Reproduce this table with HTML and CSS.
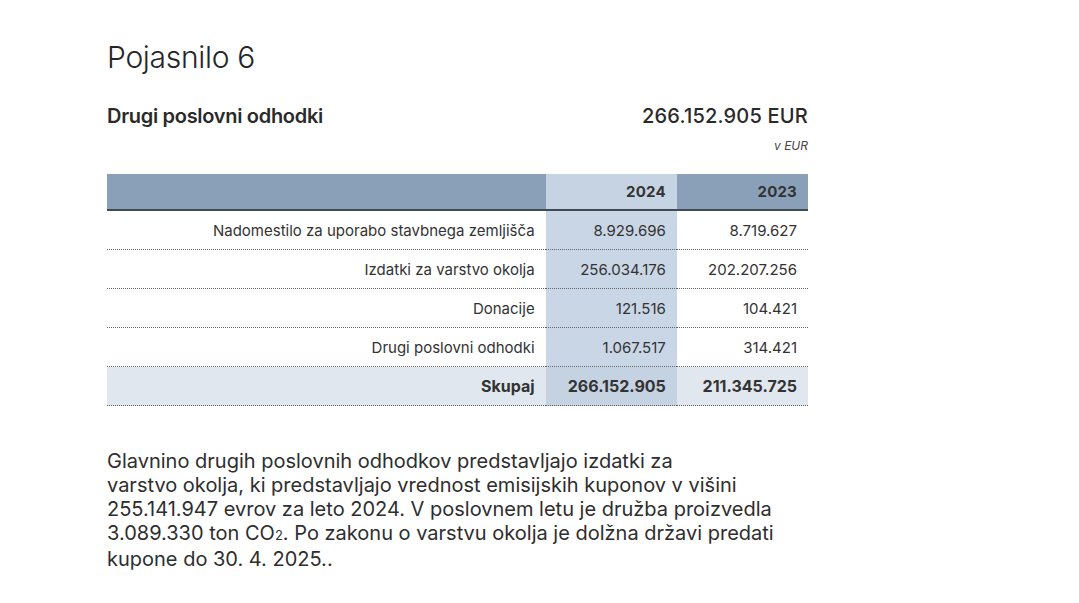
FILE: index.html
```html
<!DOCTYPE html>
<html lang="sl">
<head>
<meta charset="utf-8">
<link rel="stylesheet" href="styles.css">
</head>
<body>
<main class="page">
  <h1 class="title">Pojasnilo 6</h1>
  <div class="summary">
    <h2 class="summary-label">Drugi poslovni odhodki</h2>
    <div class="summary-value">266.152.905 EUR</div>
  </div>
  <div class="unit">v EUR</div>
  <table class="data">
    <thead>
      <tr>
        <th class="label"></th>
        <th class="cur">2024</th>
        <th class="prev">2023</th>
      </tr>
    </thead>
    <tbody>
      <tr><td class="label">Nadomestilo za uporabo stavbnega zemljišča</td><td class="cur">8.929.696</td><td class="prev">8.719.627</td></tr>
      <tr><td class="label">Izdatki za varstvo okolja</td><td class="cur">256.034.176</td><td class="prev">202.207.256</td></tr>
      <tr><td class="label">Donacije</td><td class="cur">121.516</td><td class="prev">104.421</td></tr>
      <tr><td class="label">Drugi poslovni odhodki</td><td class="cur">1.067.517</td><td class="prev">314.421</td></tr>
      <tr class="total"><td class="label">Skupaj</td><td class="cur">266.152.905</td><td class="prev">211.345.725</td></tr>
    </tbody>
  </table>
  <p class="note">Glavnino drugih poslovnih odhodkov predstavljajo izdatki za<br>varstvo okolja, ki predstavljajo vrednost emisijskih kuponov v višini<br>255.141.947 evrov za leto 2024. V poslovnem letu je družba proizvedla<br>3.089.330 ton CO<span class="sub">2</span>. Po zakonu o varstvu okolja je dolžna državi predati<br>kupone do 30. 4. 2025..</p>
</main>
</body>
</html>
```
FILE: styles.css
```css
html, body {
  margin: 0;
  padding: 0;
  background: #ffffff;
}
body {
  font-family: Inter, "Noto Sans", sans-serif;
  color: #2a2a2a;
}
.page {
  width: 701px;
  padding: 38px 0 0 107px;
}
.title {
  margin: 0;
  font-size: 30px;
  font-weight: 300;
  line-height: 38px;
  letter-spacing: -0.3px;
  color: #262626;
}
.summary {
  display: flex;
  justify-content: space-between;
  align-items: baseline;
  margin-top: 28px;
}
.summary-label {
  margin: 0;
  font-size: 20px;
  font-weight: 600;
  line-height: 24px;
  letter-spacing: -0.3px;
}
.summary-value {
  font-size: 20px;
  font-weight: 500;
  line-height: 24px;
  letter-spacing: 0.2px;
}
.unit {
  text-align: right;
  font-size: 12px;
  font-style: italic;
  line-height: 16px;
  margin-top: 10px;
  color: #444;
}
.data {
  width: 701px;
  border-collapse: collapse;
  margin-top: 20px;
  font-size: 15px;
  color: #333;
}
.data th, .data td {
  text-align: right;
  padding: 0 11px 0 0;
}
.data th {
  height: 35px;
  background: #8aa0b9;
  font-weight: 700;
  border-bottom: 2px solid #3f4a55;
  letter-spacing: 0.2px;
}
.data th.cur {
  background: #c6d3e3;
}
.data td {
  height: 38px;
  border-bottom: 1px dotted #666;
}
.data .label { width: 427px; }
.data .cur { width: 120px; }
.data .prev { width: 120px; }
.data td.cur {
  background: #c9d6e5;
}
.data tr.total td {
  background: #e1e7ef;
  font-weight: 700;
  font-size: 16px;
}
.data tr.total td.cur {
  background: #c5d2e2;
}
.note {
  margin: 43px 0 0 0;
  font-size: 20px;
  line-height: 24px;
  color: #2e2e2e;
  letter-spacing: 0;
}
.sub {
  font-size: 13px;
}
```
